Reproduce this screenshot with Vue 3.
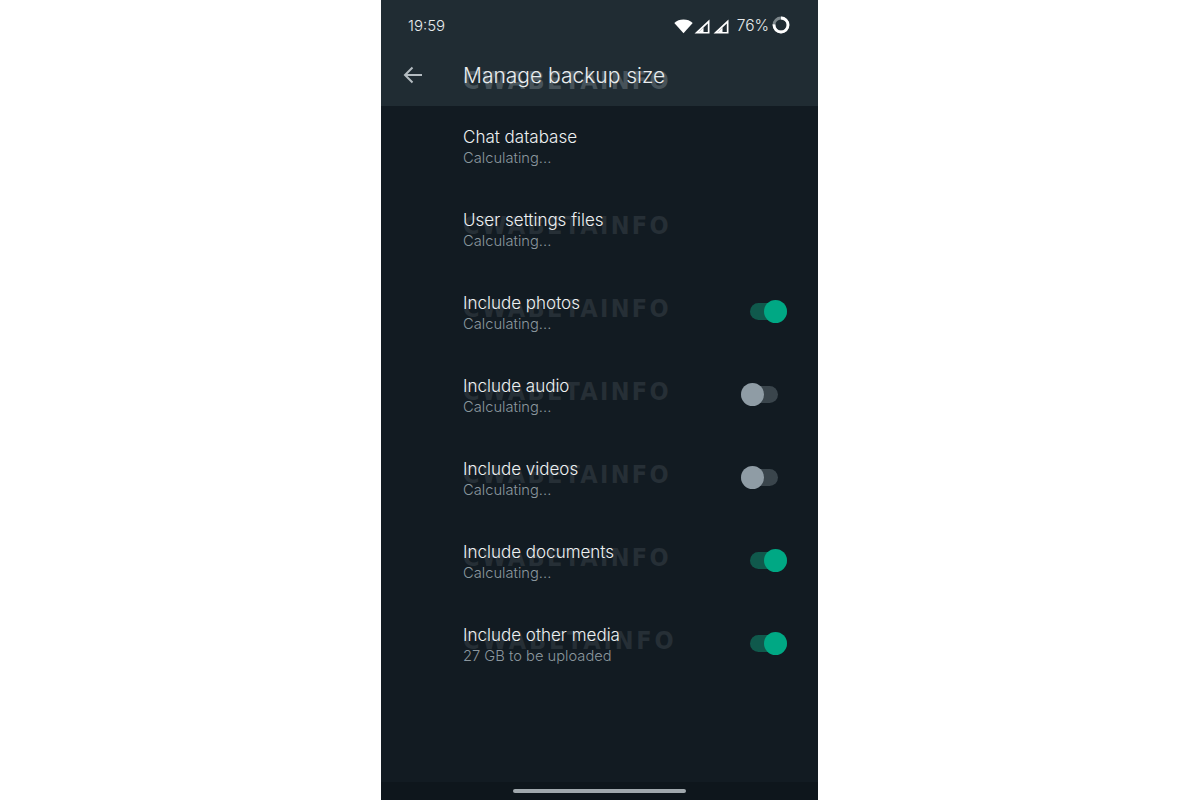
<script setup>
const rows = [
  { title: 'Chat database', sub: 'Calculating...', mark: false },
  { title: 'User settings files', sub: 'Calculating...', mark: true },
  { title: 'Include photos', sub: 'Calculating...', mark: true, toggle: 'on' },
  { title: 'Include audio', sub: 'Calculating...', mark: true, toggle: 'off' },
  { title: 'Include videos', sub: 'Calculating...', mark: true, toggle: 'off' },
  { title: 'Include documents', sub: 'Calculating...', mark: true, toggle: 'on' },
  { title: 'Include other media', sub: '27 GB to be uploaded', mark: true, toggle: 'on', wide: true },
]
</script>

<template>
  <div class="page">
    <div></div>
    <main class="phone">
      <header class="top">
        <div class="status">
          <span class="time">19:59</span>
          <div class="status-right">
            <svg class="wifi" width="19" height="15" viewBox="0 0 18 14"><path d="M0.3 3.6C2.6 1.5 5.6 0.4 9 0.4s6.4 1.1 8.700 3.200L9 13.500z" fill="#fff"/></svg>
            <svg class="signal" width="16" height="15" viewBox="0 0 16 15"><path d="M15.500 .5V14.500H.5zM13.800 4.500L4.800 12.900H13.800z" fill="#fff" fill-rule="evenodd"/><path d="M9.500 8.500L4.800 12.900H9.500z" fill="#fff"/></svg>
            <svg class="signal" width="16" height="15" viewBox="0 0 16 15"><path d="M15.500 .5V14.500H.5zM13.800 4.500L4.800 12.900H13.800z" fill="#fff" fill-rule="evenodd"/><path d="M9.500 8.500L4.800 12.900H9.500z" fill="#fff"/></svg>
            <span class="battery-text">76%</span>
            <svg width="18" height="18" viewBox="0 0 18 18"><circle cx="9" cy="9" r="7" fill="none" stroke="#7d878b" stroke-width="2.800"/><circle cx="9" cy="9" r="7" fill="none" stroke="#fff" stroke-width="2.800" stroke-dasharray="33.400 44" transform="rotate(-90 9 9)"/></svg>
          </div>
        </div>
        <div class="appbar">
          <svg class="back" width="20" height="18" viewBox="0 0 20 18"><path d="M19 9H2.500M9.500 1.500L2 9l7.500 7.500" fill="none" stroke="#b4bcc1" stroke-width="2"/></svg>
          <h1 class="heading">Manage backup size</h1>
          <span class="mark mark-head">CWABETAINFO</span>
        </div>
      </header>

      <section class="list">
        <div v-for="row in rows" :key="row.title" class="row">
          <span v-if="row.mark" class="mark" :class="{ wide: row.wide }">CWABETAINFO</span>
          <div class="text">
            <div class="title">{{ row.title }}</div>
            <div class="sub">{{ row.sub }}</div>
          </div>
          <div v-if="row.toggle" class="toggle" :class="row.toggle">
            <span class="knob"></span>
          </div>
        </div>
      </section>

      <footer class="nav"><span class="pill"></span></footer>
    </main>
  </div>
</template>

<style scoped>
.page {
  display: grid;
  grid-template-columns: 381px 437px 1fr;
  height: 800px;
  background: #fff;
  font-family: Inter, "Liberation Sans", sans-serif;
  font-weight: 300;
}
.phone {
  display: flex;
  flex-direction: column;
  height: 800px;
  background: #121b22;
  overflow: hidden;
}
.top {
  height: 106px;
  background: #202c33;
  flex: none;
}
.status {
  height: 50px;
  display: flex;
  align-items: center;
  justify-content: space-between;
  padding: 0 28px 0 27px;
  color: #e6e9eb;
  font-size: 15px;
}
.status-right {
  display: flex;
  align-items: center;
  gap: 3px;
  font-size: 15.500px;
}
.wifi {
  margin-right: -2px;
  margin-top: 2px;
}
.signal { margin-top: 2px; }
.battery-text { margin-left: 5px; }
.appbar {
  position: relative;
  height: 56px;
  display: flex;
  align-items: center;
  padding-left: 22px;
}
.back { margin-top: -7px; }
.heading {
  position: relative;
  z-index: 1;
  margin: -6px 0 0 40px;
  font-size: 21px;
  font-weight: 300;
  color: #e9edef;
}
.mark {
  position: absolute;
  left: 82px;
  top: 50%;
  margin-top: -17px;
  font-family: "DejaVu Sans", sans-serif;
  font-stretch: condensed;
  font-weight: 700;
  font-size: 25px;
  line-height: 28px;
  letter-spacing: 2.300px;
  color: #262f36;
  white-space: nowrap;
}
.mark-head {
  top: 17px;
  margin-top: 0;
  color: #47535a;
}
.mark.wide {
  letter-spacing: 2.800px;
}
.list {
  flex: 1;
  margin-top: -2px;
}
.row {
  position: relative;
  height: 83px;
  display: flex;
  align-items: center;
  justify-content: space-between;
  padding: 0 31px 0 82px;
}
.text {
  position: relative;
  z-index: 1;
}
.title {
  font-size: 17px;
  line-height: 24px;
  color: #eef1f2;
}
.sub {
  font-size: 14.700px;
  line-height: 18px;
  color: #8b979e;
}
.toggle {
  position: relative;
  width: 37px;
  height: 17px;
  border-radius: 9px;
  margin-top: -1px;
}
.toggle.on {
  background: #10594c;
}
.toggle.off {
  background: #3a454c;
  margin-right: 9px;
}
.knob {
  position: absolute;
  top: -3px;
  width: 23px;
  height: 23px;
  border-radius: 50%;
}
.on .knob {
  right: 0;
  background: #00a884;
}
.off .knob {
  left: 0;
  background: #8f9ca5;
}
.nav {
  height: 18px;
  flex: none;
  background: #0e161c;
  display: flex;
  justify-content: center;
  padding-top: 7px;
  box-sizing: border-box;
}
.pill {
  width: 173px;
  height: 4px;
  border-radius: 2px;
  background: #a0a8ad;
}
</style>
